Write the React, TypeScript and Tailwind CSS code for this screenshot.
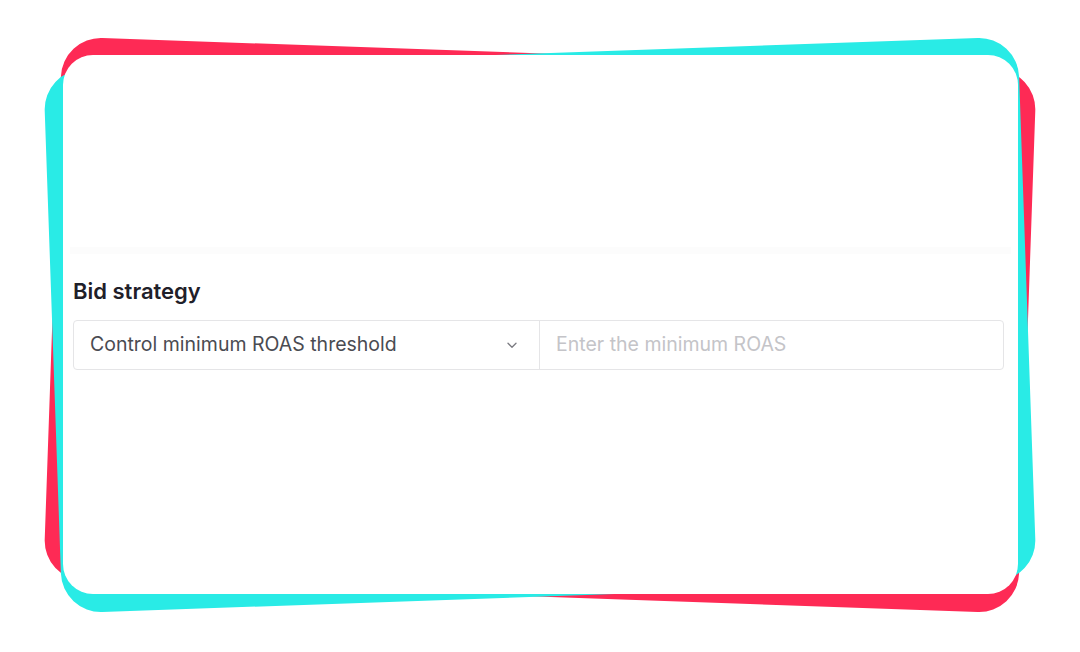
import React from "react";

const Frame = () => (
  <svg
    className="absolute inset-0"
    width="1080"
    height="652"
    viewBox="0 0 1080 652"
    aria-hidden="true"
  >
    <rect x="52.5" y="53.5" width="975" height="543" rx="40" fill="#fe2a55" transform="rotate(2 540 325)" />
    <rect x="52.5" y="53.5" width="975" height="543" rx="40" fill="#29ebe6" transform="rotate(-2 540 325)" />
  </svg>
);

const Chevron = () => (
  <svg width="14" height="14" viewBox="0 0 14 14" fill="none">
    <path d="M3 5.25 7 9.25l4-4" stroke="#7a7a80" strokeWidth="1.3" strokeLinecap="round" strokeLinejoin="round" />
  </svg>
);

export default function App() {
  return (
    <div
      className="relative w-[1080px] h-[652px] bg-white overflow-hidden"
      style={{ fontFamily: "Inter, 'Noto Sans', sans-serif" }}
    >
      <Frame />

      {/* white card */}
      <div className="relative ml-[63px] pt-[55px]">
        <div className="w-[955px] h-[539px] rounded-[30px] bg-white flex flex-col">
          <div className="mt-[192px] mx-[7px] h-[7px] bg-[#fcfcfc]" />

          <div className="ml-[10px] mt-[23px] text-[22px] leading-[28px] font-semibold text-[#1f2029]">
            Bid strategy
          </div>

          <div className="ml-[10px] mt-[15px] w-[931px] h-[50px] flex border border-[#e5e5e7] rounded-[4px]">
            <div className="w-[466px] flex items-center justify-between pl-[16px] pr-[20px] border-r border-[#e5e5e7]">
              <span className="text-[19.5px] text-[#4a4b52]">Control minimum ROAS threshold</span>
              <Chevron />
            </div>
            <div className="flex-1 flex items-center pl-[16px]">
              <span className="text-[19.5px] text-[#c4c4c8]">Enter the minimum ROAS</span>
            </div>
          </div>
        </div>
      </div>
    </div>
  );
}
